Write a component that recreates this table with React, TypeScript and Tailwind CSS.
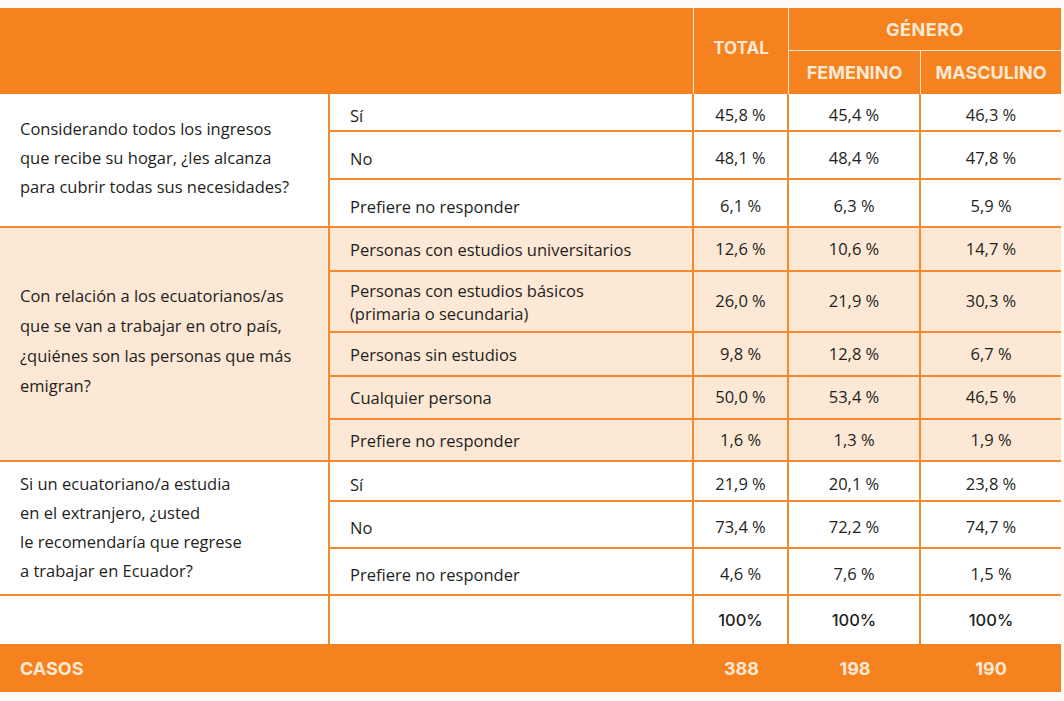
import type { ReactNode } from "react";

const ORANGE = "bg-[#f5821f]";

interface Answer {
  label: ReactNode;
  total: string;
  fem: string;
  masc: string;
  h: number;
}

interface Block {
  question: ReactNode;
  shaded: boolean;
  qClass: string;
  rowPad: string;
  answers: Answer[];
}

const blocks: Block[] = [
  {
    question: (
      <>
        Considerando todos los ingresos
        <br />
        que recibe su hogar, ¿les alcanza
        <br />
        para cubrir todas sus necesidades?
      </>
    ),
    shaded: false,
    qClass: "pb-[6px] leading-[29px]",
    rowPad: "pt-[6px]",
    answers: [
      { label: "Sí", total: "45,8 %", fem: "45,4 %", masc: "46,3 %", h: 38 },
      { label: "No", total: "48,1 %", fem: "48,4 %", masc: "47,8 %", h: 48 },
      { label: "Prefiere no responder", total: "6,1 %", fem: "6,3 %", masc: "5,9 %", h: 48 },
    ],
  },
  {
    question: (
      <>
        Con relación a los ecuatorianos/as
        <br />
        que se van a trabajar en otro país,
        <br />
        ¿quiénes son las personas que más
        <br />
        emigran?
      </>
    ),
    shaded: true,
    qClass: "pb-[6px] leading-[30px]",
    rowPad: "",
    answers: [
      { label: "Personas con estudios universitarios", total: "12,6 %", fem: "10,6 %", masc: "14,7 %", h: 44 },
      {
        label: (
          <>
            Personas con estudios básicos
            <br />
            (primaria o secundaria)
          </>
        ),
        total: "26,0 %",
        fem: "21,9 %",
        masc: "30,3 %",
        h: 61,
      },
      { label: "Personas sin estudios", total: "9,8 %", fem: "12,8 %", masc: "6,7 %", h: 44 },
      { label: "Cualquier persona", total: "50,0 %", fem: "53,4 %", masc: "46,5 %", h: 43 },
      { label: "Prefiere no responder", total: "1,6 %", fem: "1,3 %", masc: "1,9 %", h: 42 },
    ],
  },
  {
    question: (
      <>
        Si un ecuatoriano/a estudia
        <br />
        en el extranjero, ¿usted
        <br />
        le recomendaría que regrese
        <br />
        a trabajar en Ecuador?
      </>
    ),
    shaded: false,
    qClass: "pb-[2px] leading-[29px]",
    rowPad: "pt-[6px]",
    answers: [
      { label: "Sí", total: "21,9 %", fem: "20,1 %", masc: "23,8 %", h: 40 },
      { label: "No", total: "73,4 %", fem: "72,2 %", masc: "74,7 %", h: 47 },
      { label: "Prefiere no responder", total: "4,6 %", fem: "7,6 %", masc: "1,5 %", h: 47 },
    ],
  },
];

const cellLine = "border-b-2 border-r-2 border-[#f5892e]";
const headFont = "font-['Inter',sans-serif] font-bold text-[#fde9d4]";

export default function App() {
  return (
    <div className="min-h-[701px] bg-[#fefbf7] pt-[8px] font-['Open_Sans',sans-serif] text-[16.5px] font-medium text-[#231f20]">
      <table className="w-[1061px] table-fixed border-separate border-spacing-0">
        <colgroup>
          <col className="w-[330px]" />
          <col className="w-[364px]" />
          <col className="w-[95px]" />
          <col className="w-[132px]" />
          <col className="w-[140px]" />
        </colgroup>
        <thead>
          <tr className="h-[43px]">
            <th colSpan={2} rowSpan={2} className={`${ORANGE} border-r border-[#fde6cf]`} />
            <th rowSpan={2} className={`${ORANGE} ${headFont} border-r border-[#fde6cf] pb-[4px] text-[17px]`}>
              TOTAL
            </th>
            <th colSpan={2} className={`${ORANGE} ${headFont} border-b border-[#fde6cf] text-[18px] tracking-[0.5px]`}>
              GÉNERO
            </th>
          </tr>
          <tr className="h-[43px]">
            <th className={`${ORANGE} ${headFont} border-r border-[#fde6cf] text-[18px]`}>FEMENINO</th>
            <th className={`${ORANGE} ${headFont} text-[18px]`}>MASCULINO</th>
          </tr>
        </thead>
        <tbody>
          {blocks.map((b, bi) =>
            b.answers.map((a, ai) => {
              const bg = b.shaded ? "bg-[#fde7d5]" : "bg-white";
              return (
                <tr key={`${bi}-${ai}`} style={{ height: a.h }} className={bg}>
                  {ai === 0 && (
                    <td rowSpan={b.answers.length} className={`${cellLine} pl-[20px] align-middle ${b.qClass}`}>
                      {b.question}
                    </td>
                  )}
                  <td className={`${cellLine} ${b.rowPad} pl-[20px] leading-[23px]`}>{a.label}</td>
                  <td className={`${cellLine} ${b.rowPad} text-center`}>{a.total}</td>
                  <td className={`${cellLine} ${b.rowPad} text-center`}>{a.fem}</td>
                  <td className={`border-b-2 border-[#f5892e] ${b.rowPad} text-center`}>{a.masc}</td>
                </tr>
              );
            })
          )}
          <tr className="h-[48px] bg-white font-['Inter',sans-serif] text-[16.5px] font-medium">
            <td className="border-r-2 border-[#f5892e]" />
            <td className="border-r-2 border-[#f5892e]" />
            <td className="border-r-2 border-[#f5892e] text-center">100%</td>
            <td className="border-r-2 border-[#f5892e] text-center">100%</td>
            <td className="text-center">100%</td>
          </tr>
          <tr className={`h-[48px] ${ORANGE} ${headFont} text-[18px]`}>
            <td colSpan={2} className="pl-[20px]">CASOS</td>
            <td className="text-center">388</td>
            <td className="text-center">198</td>
            <td className="text-center">190</td>
          </tr>
        </tbody>
      </table>
    </div>
  );
}
